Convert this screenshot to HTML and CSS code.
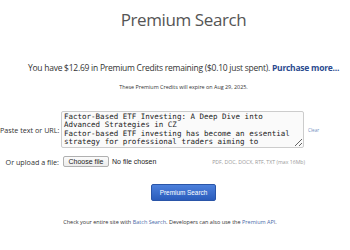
FILE: index.html
```html
<!DOCTYPE html>
<html>
<head>
<meta charset="utf-8">
<link rel="stylesheet" href="styles.css">
</head>
<body>
<div class="page">
  <div class="head">
    <h1 class="title">Premium Search</h1>
    <p class="credits">You have $12.69 in Premium Credits remaining ($0.10 just spent). <a class="purchase" href="#">Purchase more...</a></p>
    <p class="expire">These Premium Credits will expire on Aug 29, 2025.</p>
  </div>
  <form class="form">
    <div class="row row-text">
      <label class="label">Paste text or URL:</label>
      <textarea class="input" rows="4">Factor-Based ETF Investing: A Deep Dive into Advanced Strategies in CZ
Factor-based ETF investing has become an essential strategy for professional traders aiming to outperform traditional market-cap weighted indices.</textarea>
      <a class="clear" href="#">Clear</a>
    </div>
    <div class="row row-file">
      <span class="label">Or upload a file:</span>
      <div class="filebox">
        <label class="filepick">
          <input class="file" type="file">
          <span class="filebtn">Choose file</span>
          <span class="filename">No file chosen</span>
        </label>
        <span class="formats">PDF, DOC, DOCX, RTF, TXT (max 16Mb)</span>
      </div>
    </div>
    <div class="submit-row">
      <button class="submit" type="button">Premium Search</button>
    </div>
  </form>
  <p class="footer">Check your entire site with <a class="link" href="#">Batch Search</a>. Developers can also use the <a class="link" href="#">Premium API</a>.</p>
</div>
</body>
</html>
```
FILE: styles.css
```css
html, body {
  margin: 0;
  padding: 0;
  background: #ffffff;
}
.page {
  width: 350px;
  font-family: "Open Sans", "Liberation Sans", sans-serif;
  color: #333333;
  text-align: center;
}
.head {
  padding-left: 17px;
}
.title {
  margin: 0;
  padding-top: 8px;
  font-size: 17px;
  font-weight: 400;
  letter-spacing: -0.4px;
  color: #555555;
  line-height: 24px;
}
.credits {
  margin: 30px 0 0;
  font-size: 8.5px;
  letter-spacing: -0.25px;
  line-height: 12px;
  white-space: nowrap;
  color: #333333;
}
.purchase {
  color: #2b4b8f;
  font-weight: 700;
  text-decoration: none;
}
.expire {
  margin: 9px 0 0;
  font-size: 5.4px;
  line-height: 8px;
  color: #333333;
}
.form {
  margin-top: 20px;
}
.row {
  display: flex;
  align-items: center;
  text-align: left;
}
.label {
  width: 59px;
  flex: none;
  text-align: right;
  white-space: nowrap;
  font-size: 7.2px;
  color: #333333;
}
.input {
  margin: 0 0 0 2px;
  width: 243px;
  height: 37px;
  box-sizing: border-box;
  padding: 1px 2px 0;
  border: 1px solid #cccccc;
  border-radius: 2px;
  background: #fafafa;
  font-family: "DejaVu Sans Mono", monospace;
  font-size: 7.5px;
  line-height: 8.4px;
  color: #222222;
  overflow: hidden;
  resize: vertical;
}
.clear {
  margin-left: 4px;
  font-size: 4.6px;
  color: #6f8fbf;
  text-decoration: none;
}
.row-file {
  margin-top: 8px;
}
.filebox {
  margin-left: 4px;
  width: 242px;
  display: flex;
  align-items: center;
  justify-content: space-between;
}
.filepick {
  display: flex;
  align-items: center;
  gap: 3px;
  font-family: "Liberation Sans", Arial, sans-serif;
  font-size: 7px;
  color: #222222;
}
.file {
  display: none;
}
.filebtn {
  box-sizing: border-box;
  width: 46px;
  height: 11px;
  line-height: 9px;
  text-align: center;
  border: 1px solid #b0b0b0;
  border-radius: 2px;
  background: linear-gradient(#fbfbfb, #ececec);
  color: #222222;
}
.filename {
  color: #222222;
}
.formats {
  font-size: 5.2px;
  color: #9a9a9a;
}
.submit-row {
  margin-top: 17px;
  padding-left: 17px;
  display: flex;
  justify-content: center;
}
.submit {
  width: 65px;
  height: 17px;
  padding: 0;
  border: 1px solid #2a55a8;
  border-radius: 2px;
  background: linear-gradient(#4c80dc, #2a5cbc);
  color: #ffffff;
  font-family: "Liberation Sans", Arial, sans-serif;
  font-size: 6.4px;
}
.footer {
  margin: 17px 0 0;
  padding-left: 17px;
  padding-right: 27px;
  font-size: 5.5px;
  line-height: 8px;
  white-space: nowrap;
  color: #333333;
}
.link {
  color: #4a6aa8;
  text-decoration: none;
}
```
